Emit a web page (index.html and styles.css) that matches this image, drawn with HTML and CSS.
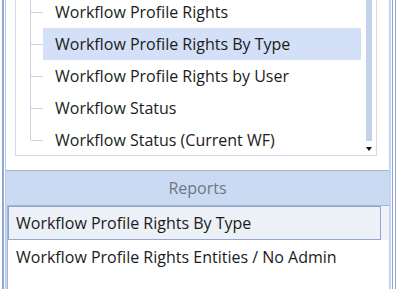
FILE: index.html
```html
<html>
<head>
  <link rel="stylesheet" href="styles.css">
</head>
<body>

<div class="window">
  <div class="pane">
    <div class="tree-panel">
      <div class="tree-box">
        <ul class="tree-list">
          <li class="node"><span class="label">Workflow Profile Rights</span></li>
          <li class="node"><span class="label selected">Workflow Profile Rights By Type</span></li>
          <li class="node"><span class="label">Workflow Profile Rights by User</span></li>
          <li class="node"><span class="label">Workflow Status</span></li>
          <li class="node last"><span class="label">Workflow Status (Current WF)</span></li>
        </ul>
        <div class="scrollbar">
          <div class="thumb"></div>
          <div class="arrow-down"></div>
        </div>
      </div>
    </div>

    <div class="reports-header">Reports</div>

    <div class="reports">
      <div class="report-list">
        <div class="report-row"><span class="report-item current">Workflow Profile Rights By Type</span></div>
        <div class="report-row"><span class="report-item">Workflow Profile Rights Entities / No Admin</span></div>
      </div>
    </div>
  </div>
</div>

</body>
</html>
```

FILE: styles.css
```css
body {
  margin: 0;
  width: 400px;
  height: 289px;
  overflow: hidden;
  background: #fff;
  font-family: "Open Sans", "Noto Sans", sans-serif;
  font-size: 16px;
  color: #1b1b1b;
}

.window {
  margin-left: 2px;
  width: 386px;
  height: 289px;
  border-left: 2px solid #8ea7d8;
  border-right: 1px solid #8ea7d8;
  padding: 0 1px 0 1px;
  background: #fff;
  box-shadow: 2px 0 0 #fff, 3px 0 0 #8ea7d8;
}

.pane {
  height: 100%;
  border-left: 1px solid #b9cbea;
  border-right: 2px solid #c6d5ef;
  box-shadow: inset -1px 0 0 #9fb5e0;
  display: flex;
  flex-direction: column;
}

/* tree area */
.tree-panel {
  height: 170px;
  padding-left: 9px;
  background: #fff;
  border-bottom: 1px solid #a9b7cd;
}

.tree-box {
  width: 360px;
  height: 155px;
  border: 1px solid #d3dae6;
  border-top: none;
  display: flex;
  overflow: hidden;
}

.tree-list {
  flex: 1;
  list-style: none;
  margin: -4px 0 0 0;
  padding: 0;
}

.node {
  position: relative;
  height: 32px;
  display: flex;
  align-items: center;
  padding-left: 27px;
  padding-right: 5px;
}

.node::before {
  content: "";
  position: absolute;
  left: 14px;
  top: 0;
  bottom: 0;
  border-left: 1px solid #c8d2e2;
}

.node.last::before {
  bottom: 16px;
}

.node::after {
  content: "";
  position: absolute;
  left: 15px;
  top: 16px;
  width: 12px;
  border-top: 1px solid #c8d2e2;
}

.label {
  flex: 1;
  height: 32px;
  line-height: 32px;
  padding-left: 12px;
  white-space: nowrap;
}

.label.selected {
  background: #d3e0f7;
}

.scrollbar {
  width: 6px;
  margin-right: 4px;
  position: relative;
}

.thumb {
  height: 141px;
  background: #c3d1ea;
}

.arrow-down {
  position: absolute;
  left: 0;
  top: 147px;
  width: 0;
  height: 0;
  border-left: 3px solid transparent;
  border-right: 3px solid transparent;
  border-top: 4px solid #111;
}

/* reports */
.reports-header {
  height: 34px;
  line-height: 34px;
  text-align: center;
  background: #c9daf2;
  color: #6e7682;
}

.reports {
  flex: 1;
  background: #c9daf2;
  padding-left: 1px;
}

.report-list {
  height: 100%;
  background: #fff;
  border-top: 1px solid #a8b6cc;
  border-left: 1px solid #a8b6cc;
}

.report-row {
  height: 34px;
  display: flex;
  padding-right: 8px;
}

.report-row:first-child {
  background: #eef2f9;
}

.report-item {
  flex: 1;
  line-height: 32px;
  padding-left: 7px;
  white-space: nowrap;
  border: 1px solid transparent;
}

.report-item.current {
  background: #ecf0f7;
  border-color: #90a7d2;
}
```
